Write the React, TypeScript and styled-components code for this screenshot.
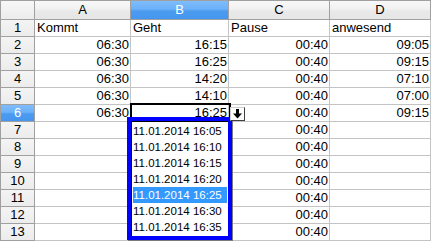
import React from "react";
import styled, { createGlobalStyle, css } from "styled-components";

const GlobalStyle = createGlobalStyle`
  html, body {
    margin: 0;
    padding: 0;
    background: #ffffff;
    overflow: hidden;
  }
  body {
    font-family: "Liberation Sans", Arial, sans-serif;
    font-size: 13px;
    color: #000;
  }
`;

const Sheet = styled.div`
  display: grid;
  grid-template-columns: 34px 96px 98px 101px 101px;
  grid-template-rows: 19px repeat(13, 17px);
  width: max-content;
  border-left: 1px solid #a0a0a0;
  border-top: 1px solid #a0a0a0;
`;

const headerBase = css`
  box-sizing: border-box;
  display: flex;
  align-items: center;
  justify-content: center;
  border-right: 1px solid #a0a0a0;
  border-bottom: 1px solid #a0a0a0;
  font-size: 13px;
  line-height: 16px;
`;

const Corner = styled.div`
  ${headerBase};
  background: linear-gradient(#f7f7f7, #ececec);
`;

const ColHeader = styled.div<{ $active?: boolean }>`
  ${headerBase};
  color: ${(p) => (p.$active ? "#ffffff" : "#000000")};
  background: ${(p) =>
    p.$active
      ? "linear-gradient(#7fbcfb 0%, #6cb1fa 45%, #4b9cf0 55%, #4596ee 100%)"
      : "linear-gradient(#f8f8f8 0%, #f1f1f1 45%, #e9e9e9 55%, #e6e6e6 100%)"};
`;

const RowHeader = styled.div<{ $active?: boolean }>`
  ${headerBase};
  color: ${(p) => (p.$active ? "#ffffff" : "#000000")};
  background: ${(p) =>
    p.$active
      ? "linear-gradient(#7fbcfb 0%, #6cb1fa 45%, #4b9cf0 55%, #4596ee 100%)"
      : "linear-gradient(#f4f4f4, #ececec)"};
`;

const Cell = styled.div<{ $align?: "left" | "right"; $selected?: boolean }>`
  box-sizing: border-box;
  border-right: 1px solid #c4c4c4;
  border-bottom: 1px solid #c4c4c4;
  padding: 0 1px 0 2px;
  font-size: 13px;
  line-height: 16px;
  white-space: nowrap;
  text-align: ${(p) => (p.$align === "left" ? "left" : "right")};
  ${(p) =>
    p.$selected &&
    css`
      position: relative;
      &::after {
        content: "";
        position: absolute;
        top: -2px;
        left: -1px;
        right: -3px;
        bottom: -1px;
        border: 2px solid #000;
        pointer-events: none;
      }
    `}
`;

const DropButton = styled.div`
  position: absolute;
  left: 99px;
  top: 2px;
  width: 15px;
  height: 14px;
  box-sizing: border-box;
  background: #ffffff;
  border: 1px solid;
  border-color: #cfcfcf #404040 #404040 #cfcfcf;
  display: flex;
  align-items: center;
  justify-content: center;
  z-index: 3;
`;

const ListBox = styled.div`
  position: absolute;
  left: -4px;
  top: 12px;
  width: 105px;
  height: 123px;
  box-sizing: border-box;
  border: 4px solid #0000ff;
  background: #ffffff;
  box-shadow: 1px 1px 0 #7a7a7a;
  text-align: left;
  z-index: 2;
`;

const ListInner = styled.div`
  box-sizing: border-box;
  height: 100%;
  border-left: 1px solid #000;
  border-top: 1px solid #000;
  padding: 1px 1px 0 1px;
  display: flex;
  flex-direction: column;
`;

const ListItem = styled.div<{ $active?: boolean }>`
  height: 16px;
  line-height: 16px;
  font-size: 11.5px;
  padding-left: 0;
  white-space: nowrap;
  color: ${(p) => (p.$active ? "#ffffff" : "#000000")};
  background: ${(p) => (p.$active ? "#3399ff" : "transparent")};
`;

const ArrowIcon = () => (
  <svg width="9" height="10" viewBox="0 0 9 10">
    <rect x="3" y="0" width="3" height="5" fill="#000" />
    <polygon points="0,4.5 9,4.5 4.5,9.5" fill="#000" />
  </svg>
);

type Row = [string, string, string, string];

const rows: Row[] = [
  ["Kommt", "Geht", "Pause", "anwesend"],
  ["06:30", "16:15", "00:40", "09:05"],
  ["06:30", "16:25", "00:40", "09:15"],
  ["06:30", "14:20", "00:40", "07:10"],
  ["06:30", "14:10", "00:40", "07:00"],
  ["06:30", "16:25", "00:40", "09:15"],
  ["", "", "00:40", ""],
  ["", "", "00:40", ""],
  ["", "", "00:40", ""],
  ["", "", "00:40", ""],
  ["", "", "00:40", ""],
  ["", "", "00:40", ""],
  ["", "", "00:40", ""],
];

const options = [
  "11.01.2014 16:05",
  "11.01.2014 16:10",
  "11.01.2014 16:15",
  "11.01.2014 16:20",
  "11.01.2014 16:25",
  "11.01.2014 16:30",
  "11.01.2014 16:35",
];

const columns = ["A", "B", "C", "D"];

export default function App() {
  return (
    <>
      <GlobalStyle />
      <Sheet>
        <Corner />
        {columns.map((c) => (
          <ColHeader key={c} $active={c === "B"}>
            {c}
          </ColHeader>
        ))}
        {rows.map((r, ri) => {
          const rowNum = ri + 1;
          return (
            <React.Fragment key={rowNum}>
              <RowHeader $active={rowNum === 6}>{rowNum}</RowHeader>
              {r.map((v, ci) => {
                const selected = rowNum === 6 && ci === 1;
                return (
                  <Cell
                    key={ci}
                    $align={rowNum === 1 ? "left" : "right"}
                    $selected={selected}
                  >
                    {v}
                    {selected && (
                      <>
                        <DropButton>
                          <ArrowIcon />
                        </DropButton>
                        <ListBox>
                          <ListInner>
                            {options.map((o) => (
                              <ListItem key={o} $active={o.endsWith("16:25")}>
                                {o}
                              </ListItem>
                            ))}
                          </ListInner>
                        </ListBox>
                      </>
                    )}
                  </Cell>
                );
              })}
            </React.Fragment>
          );
        })}
      </Sheet>
    </>
  );
}
